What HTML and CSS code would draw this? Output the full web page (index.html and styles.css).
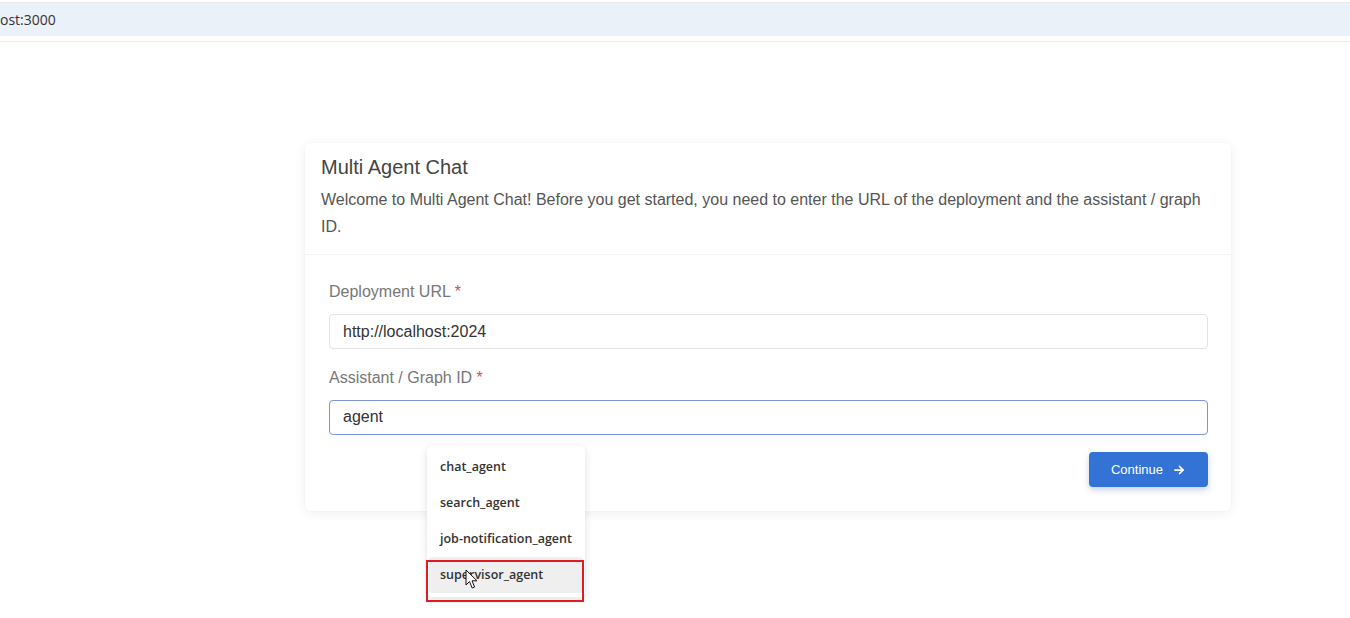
FILE: index.html
```html
<!DOCTYPE html>
<html lang="en">
<head>
    <meta charset="UTF-8">
    <meta name="viewport" content="width=device-width, initial-scale=1.0">
    <title>Multi Agent Chat</title>
    <link rel="stylesheet" href="styles.css">
</head>
<body>
    <div class="address-bar">
        <span class="address-text">ost:3000</span>
    </div>

    <div class="card">
        <div class="card-header">
            <h1 class="card-title">Multi Agent Chat</h1>
            <p class="card-desc">Welcome to Multi Agent Chat! Before you get started, you need to enter the URL of the deployment and the assistant / graph ID.</p>
        </div>

        <div class="card-body">
            <label class="field-label">Deployment URL <span class="req">*</span></label>
            <div class="input">http://localhost:2024</div>

            <label class="field-label second">Assistant / Graph ID <span class="req">*</span></label>
            <div class="input focused">agent</div>

            <div class="actions">
                <button class="button">Continue
                    <svg width="14" height="14" viewBox="0 0 24 24" fill="none" stroke="#fff" stroke-width="3" stroke-linecap="round" stroke-linejoin="round"><path d="M5 12h14"/><path d="M13 6l6 6-6 6"/></svg>
                </button>
            </div>
        </div>
    </div>

    <!-- suggestion popup for the graph id field -->
    <ul class="dropdown">
        <li class="option">chat_agent</li>
        <li class="option">search_agent</li>
        <li class="option">job-notification_agent</li>
        <li class="option active">supervisor_agent</li>
    </ul>
    <div class="highlight"></div>
    <svg class="cursor" width="14" height="21" viewBox="0 0 14 21">
        <path d="M1 1 L1 16 L4.5 12.5 L7.2 19 L9.6 18 L7 11.8 L12 11.8 Z" fill="#fff" stroke="#111" stroke-width="1" stroke-linejoin="round"/>
    </svg>
</body>
</html>
```

FILE: styles.css
```css
html, body {
    height: 100%;
}
body {
    position: relative;
    margin: 0;
    min-height: 618px;
    background-color: #fff;
    font-family: "Liberation Sans", Arial, sans-serif;
    color: #333;
}
.address-bar {
    height: 33px;
    margin-top: 2px;
    background-color: #ebf1f9;
    border-top: 1px solid #e6ebf0;
    display: flex;
    align-items: center;
    box-shadow: 0 5px 0 #fff, 0 6px 0 #ececec;
}
.address-text {
    font-family: "Open Sans", "Noto Sans", sans-serif;
    font-size: 14px;
    color: #333;
    margin-top: -1px;
}
.card {
    width: 926px;
    margin: 107px 0 0 305px;
    background-color: #fff;
    border-radius: 6px;
    box-shadow: 0 2px 12px rgba(0, 0, 0, 0.07), 0 0 2px rgba(0, 0, 0, 0.03);
}
.card-header {
    padding: 12px 16px 14px;
    border-bottom: 1px solid #f4f4f4;
}
.card-title {
    margin: 0;
    font-size: 20px;
    font-weight: normal;
    line-height: 24px;
    color: #444;
}
.card-desc {
    margin: 7px 0 0;
    font-size: 16px;
    line-height: 27px;
    color: #555;
}
.card-body {
    padding: 27px 23px 24px 24px;
}
.field-label {
    display: block;
    font-size: 16px;
    line-height: 20px;
    color: #777;
    margin-bottom: 12px;
}
.field-label.second {
    margin-top: 19px;
}
.req {
    color: #d24b5a;
}
.input {
    height: 33px;
    border: 1px solid #e4e4e4;
    border-radius: 4px;
    padding: 0 13px;
    font-size: 16px;
    line-height: 33px;
    color: #333;
}
.input.focused {
    border: 1.5px solid #7b96d2;
    line-height: 32px;
}
.actions {
    display: flex;
    justify-content: flex-end;
    margin-top: 17px;
}
.button {
    display: flex;
    align-items: center;
    gap: 9px;
    height: 35px;
    padding: 0 22px 0 22px;
    background-color: #3373d6;
    border: none;
    border-radius: 4px;
    color: #fff;
    font-family: "Liberation Sans", Arial, sans-serif;
    font-size: 13px;
    box-shadow: 0 3px 6px rgba(30, 80, 160, 0.25);
}
.dropdown {
    position: absolute;
    left: 427px;
    top: 446px;
    width: 158px;
    margin: 0;
    padding: 3px 0 4px;
    list-style: none;
    background-color: #fff;
    border-radius: 5px;
    box-shadow: 0 2px 8px rgba(0, 0, 0, 0.12);
}
.option {
    height: 36px;
    line-height: 36px;
    padding: 0 13px;
    font-family: "Open Sans", "Noto Sans", sans-serif;
    font-size: 12.5px;
    font-weight: 600;
    color: #333;
    white-space: nowrap;
}
.option.active {
    background-color: #efefef;
    margin: 0 2px;
    padding: 0 11px;
    border-radius: 3px;
}
.highlight {
    position: absolute;
    left: 426px;
    top: 560px;
    width: 154px;
    height: 38px;
    border: 2px solid #e21b23;
}
.cursor {
    position: absolute;
    left: 465px;
    top: 569px;
}
```
